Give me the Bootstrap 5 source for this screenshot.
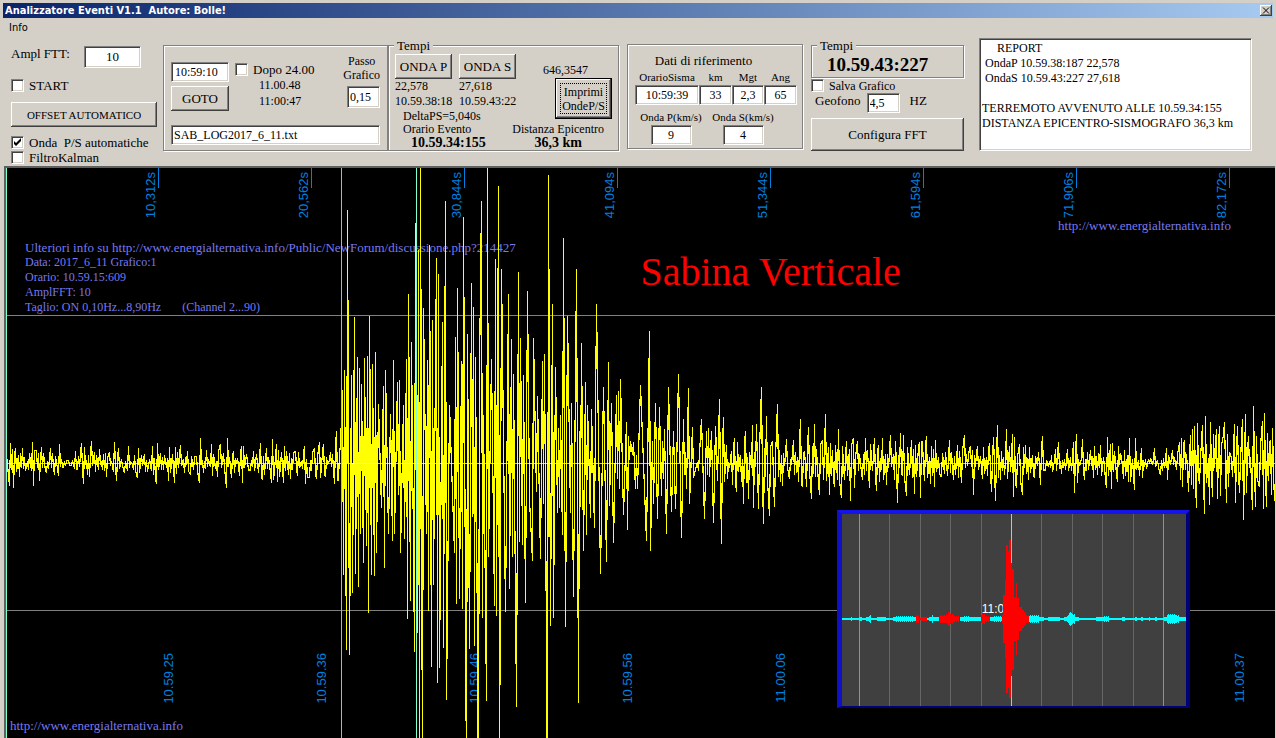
<!DOCTYPE html>
<html lang="it">
<head>
<meta charset="utf-8">
<meta name="viewport" content="width=device-width, initial-scale=1">
<title>Analizzatore Eventi V1.1</title>
<link href="https://cdn.jsdelivr.net/npm/bootstrap@5.3.0/dist/css/bootstrap.min.css" rel="stylesheet">
<style>
  :root { --face: #d4d0c8; --dark: #404040; --mid: #808080; }
  body { background: var(--face); color: #000; font: 13px/16px "Liberation Serif", serif; }
  .titlebar { margin: 3px 3px 0; height: 15px; padding: 0 0 0 2px; background: linear-gradient(90deg, #0a246a, #a6caf0); color: #fff; font: bold 11px/15px "DejaVu Sans Condensed", "DejaVu Sans", sans-serif; }
  .titlebar h1 { font: inherit; white-space: pre; }
  .menubar { height: 20px; padding-left: 9px; font: 11px/20px "DejaVu Sans Condensed", "DejaVu Sans", sans-serif; }
  .menubar a { color: #000; text-decoration: none; }

  .key { background: var(--face); color: #000; border: 0; border-radius: 0; padding: 0; font-size: 13px; line-height: 16px; height: 25px; white-space: nowrap;
    box-shadow: inset -1px -1px var(--dark), inset 1px 1px #fff, inset -2px -2px var(--mid); }
  .key-close { width: 12px; height: 11px; margin-right: 1px; line-height: 0; }
  .key-default { width: 57px; height: 41px; border: 1px solid #000; font-size: 12px; line-height: 14px; outline: 1px dotted #000; outline-offset: -6px; }
  .key-offset { margin: 9px 0 8px; }
  .key-wave { width: 57px; }
  .key-tall { height: 33px; margin-top: 5px; }
  .field { border: 1px solid; border-color: var(--mid) #fff #fff var(--mid); box-shadow: inset 1px 1px var(--dark), inset -1px -1px var(--face); border-radius: 0; background: #fff; color: #000; padding: 0 3px; font-size: 13px; line-height: 16px; height: 20px; min-width: 0; }
  .field-ampl { width: 57px; height: 22px; }
  .field-step { width: 33px; height: 22px; padding: 0 2px; }
  .field-speed { width: 41px; }
  .field-geo { width: 33px; margin: 0 10px 0 6px; padding: 0 2px; }
  .field-file { margin-top: 14px; padding: 0 2px; }
  .tick-box { appearance: none; flex: none; width: 13px; height: 13px; margin: 0; background: #fff center no-repeat; border: 1px solid; border-color: var(--mid) #fff #fff var(--mid); box-shadow: inset 1px 1px var(--dark), inset -1px -1px var(--face); }
  .tick-box:checked { background-image: url("data:image/svg+xml,%3Csvg xmlns='http://www.w3.org/2000/svg' width='9' height='9'%3E%3Cpath d='M1 3v3l2 2 5-5V0L3 5z'/%3E%3C/svg%3E"); }
  .check-line { display: flex; align-items: center; gap: 5px; height: 15px; white-space: pre; }
  .frame { border: 1px solid var(--mid); box-shadow: 1px 1px #fff, inset 1px 1px #fff; position: relative; }
  .frame legend { position: absolute; left: 5px; top: -8px; width: auto; margin: 0; padding: 0 3px; background: var(--face); font-size: 13px; line-height: 16px; float: none; }
  .fs12 { font-size: 12px; } .fs11 { font-size: 11px; } .lh13 { line-height: 13px; } .lh14 { line-height: 14px; }
  .fw14 { font-size: 14px; line-height: 14px; font-weight: bold; }
  .clock { font-size: 19px; line-height: 20px; }

  .col-main { width: 146px; margin-left: 11px; padding: 8px 0 1px; }
  .start-line { margin-top: 10px; }
  .col-goto { width: 225px; height: 106px; margin: 7px 0 0 6px; padding: 8px 7px 0; }
  .goto-keys { width: 58px; margin-right: 6px; }
  .col-waves { width: 231px; height: 106px; margin-top: 7px; padding: 8px 6px 0; }
  .delta { margin-top: -9px; }
  .col-ref { width: 176px; height: 105px; margin: 6px 0 0 8px; padding: 8px 6px 0 7px; }
  .col-fft { width: 153px; margin: 7px 0 0 8px; }
  .clock-frame { height: 33px; padding: 9px 0 0 15px; }
  .report { flex: 1 1 0; margin: 0 24px 0 15px; height: 113px; padding: 2px; font-size: 12px; line-height: 15px; resize: none; overflow: hidden; white-space: pre; }
  .wave-grid { display: grid; grid-template-columns: 64px 64px; align-self: flex-start; line-height: 15px; font-size: 12px; }
  .ref-grid { display: grid; grid-template-columns: 64px 33px 32px 33px; }
  .speed-grid { display: grid; grid-template-columns: 72px 72px; margin-top: 4px; }

  .scope { position: relative; flex: 1 1 0; min-height: 300px; margin: 0 1px 0 4px; border: 2px solid #606060; border-width: 2px 0 0 2px; background: #000; overflow: hidden; }
  .scope > svg { position: absolute; inset: 0; width: 100%; height: 100%; pointer-events: none; }
  .scope a, .notes { color: #7878f0; text-decoration: none; line-height: 15px; white-space: pre; }
  .axis { position: absolute; left: 0; width: 100%; display: flex; color: #0080e0; font: 13px/14px "Liberation Sans", sans-serif; }
  .axis > div { flex: 0 0 auto; width: calc(100% * 153 / 1269); }
  .axis span { writing-mode: vertical-rl; transform: rotate(180deg); white-space: nowrap; }
  .axis-top { top: 0; }
  .axis-top > div { display: flex; justify-content: flex-end; padding: 4px 1px 0 0; background: linear-gradient(#0080e0, #0080e0) right top / 1px 20px no-repeat; }
  .axis-bottom { top: 85%; left: 12.3%; }
  .notes { position: absolute; left: 19px; top: 72px; font-size: 12px; }
  .notes div:first-child { font-size: 13px; }
  .site-top { position: absolute; right: 44px; top: 50px; }
  .site-bottom { position: absolute; left: 4px; bottom: 5px; }
  .station { position: absolute; left: 50%; top: 80px; font-size: 40px; line-height: 48px; color: #f00; white-space: nowrap; }
  .inset-view { position: absolute; left: 65.5%; top: 60%; width: 27.8%; height: 34.8%; border: 4px solid; border-width: 4px 4px 2px 5px; border-color: #1414e8 #000078 #000078 #1010c8; background: #404040; }
  .inset-view svg { display: block; width: 100%; height: 100%; }
  .inset-view span { position: absolute; left: 40.6%; top: 46%; color: #fff; font: 12px/14px "Liberation Sans", sans-serif; }
  .scope svg { shape-rendering: crispEdges; }
  .scope path { vector-effect: non-scaling-stroke; fill: none; }
</style>
</head>
<body class="d-flex flex-column vh-100 overflow-hidden">
<header class="titlebar d-flex align-items-center justify-content-between">
  <h1 class="m-0">Analizzatore Eventi V1.1  Autore: Bolle!</h1>
  <button class="key key-close" type="button" aria-label="Chiudi"><svg width="8" height="7" viewBox="0 0 8 7"><path d="M1 0.5l6 6M7 0.5l-6 6" stroke="#000"/></svg></button>
</header>
<nav class="menubar"><a href="#">Info</a></nav>

<main class="d-flex align-items-start flex-shrink-0">
  <section class="col-main flex-shrink-0">
    <div class="d-flex justify-content-between pe-3">
      <label for="ampl">Ampl FTT:</label>
      <input id="ampl" class="field field-ampl text-center" value="10">
    </div>
    <label class="check-line start-line"><input type="checkbox" class="tick-box">START</label>
    <button class="key key-offset fs11 w-100 d-block" type="button">OFFSET AUTOMATICO</button>
    <label class="check-line"><input type="checkbox" class="tick-box" checked>Onda  P/S automatiche</label>
    <label class="check-line"><input type="checkbox" class="tick-box">FiltroKalman</label>
  </section>

  <section class="col-goto frame flex-shrink-0">
    <div class="d-flex">
      <div class="goto-keys d-flex flex-column pt-2">
        <input class="field fs12" value="10:59:10" aria-label="Orario">
        <button class="key mt-1 w-100" type="button">GOTO</button>
      </div>
      <div class="pt-2">
        <label class="check-line"><input type="checkbox" class="tick-box">Dopo 24.00</label>
        <div class="ps-4 fs12">11.00.48</div>
        <div class="ps-4 fs12">11:00:47</div>
      </div>
      <label class="ms-auto d-flex flex-column align-items-center fs12 lh14">Passo<span>Grafico</span>
        <input class="field field-step fs12 mt-1 align-self-end" value="0,15"></label>
    </div>
    <input class="field field-file fs12 w-100" value="SAB_LOG2017_6_11.txt" aria-label="File">
  </section>

  <fieldset class="col-waves frame flex-shrink-0">
    <legend>Tempi</legend>
    <div class="d-flex justify-content-between">
      <div class="wave-grid">
        <button class="key key-wave" type="button">ONDA P</button>
        <button class="key key-wave" type="button">ONDA S</button>
        <span>22,578</span><span>27,618</span>
        <span>10.59.38:18</span><span>10.59.43:22</span>
      </div>
      <div class="d-flex flex-column align-items-end pt-2">
        <span class="fs12 pe-4">646,3547</span>
        <button class="key key-default" type="button">Imprimi<br>OndeP/S</button>
      </div>
    </div>
    <div class="delta fs12 lh13 ps-2">DeltaPS=5,040s</div>
    <div class="d-flex justify-content-between fs12 lh13 ps-2 pe-2">
      <div>Orario Evento<div class="fw14 ps-2">10.59.34:155</div></div>
      <div class="text-center">Distanza Epicentro<div class="fw14">36,3 km</div></div>
    </div>
  </fieldset>

  <section class="col-ref frame flex-shrink-0">
    <div class="pe-4 text-center">Dati di riferimento</div>
    <div class="ref-grid fs11 text-center">
      <label>OrarioSisma<input class="field fs12 w-100 text-center" value="10:59:39"></label>
      <label>km<input class="field fs12 w-100 text-center" value="33"></label>
      <label>Mgt<input class="field fs12 w-100 text-center" value="2,3"></label>
      <label>Ang<input class="field fs12 w-100 text-center" value="65"></label>
    </div>
    <div class="speed-grid fs11 text-center">
      <label>Onda P(km/s)<input class="field field-speed fs12 text-center" value="9"></label>
      <label>Onda S(km/s)<input class="field field-speed fs12 text-center" value="4"></label>
    </div>
  </section>

  <section class="col-fft flex-shrink-0">
    <fieldset class="frame clock-frame">
      <legend>Tempi</legend>
      <strong class="clock">10.59.43:227</strong>
    </fieldset>
    <label class="check-line fs12"><input type="checkbox" class="tick-box">Salva Grafico</label>
    <div class="d-flex ps-1">
      <label for="geo">Geofono</label>
      <input id="geo" class="field field-geo fs12" value="4,5"><span>HZ</span>
    </div>
    <button class="key key-tall w-100 d-block" type="button">Configura FFT</button>
  </section>

  <textarea class="field report" aria-label="Report" spellcheck="false">     REPORT
 OndaP 10.59.38:187 22,578
 OndaS 10.59.43:227 27,618

TERREMOTO AVVENUTO ALLE 10.59.34:155
DISTANZA EPICENTRO-SISMOGRAFO 36,3 km</textarea>
</main>

<section class="scope">
  <div class="axis axis-top">
    <div><span>10,312s</span></div><div><span>20,562s</span></div><div><span>30,844s</span></div><div><span>41,094s</span></div><div><span>51,344s</span></div><div><span>61,594s</span></div><div><span>71,906s</span></div><div><span>82,172s</span></div>
  </div>
  <div class="axis axis-bottom">
    <div><span>10.59.25</span></div><div><span>10.59.36</span></div><div><span>10.59.46</span></div><div><span>10.59.56</span></div><div><span>11.00.06</span></div><div></div><div></div><div><span>11.00.37</span></div>
  </div>
  <div class="notes"><div>Ulteriori info su <a href="#">http://www.energialternativa.info/Public/NewForum/discussione.php?214427</a></div><div>Data: 2017_6_11 Grafico:1</div><div>Orario: 10.59.15:609</div><div>AmplFFT: 10</div><div>Taglio: ON 0,10Hz...8,90Hz       (Channel 2...90)</div></div>
  <a class="site-top" href="#">http://www.energialternativa.info</a>
  <a class="site-bottom" href="#">http://www.energialternativa.info</a>
  <div class="station">Sabina Verticale</div>

  <svg viewBox="6 168 1269 570" preserveAspectRatio="none" aria-label="Sismogramma">
    <path d="M6 315.5H1275M6 610.5H1275" stroke="#808080"/>
    <path id="trace" stroke="#ff0" stroke-width="1.2" stroke-linejoin="bevel"/>
    <path d="M6 463.5H1275" stroke="#fff" stroke-opacity=".75"/>
    <path d="M341.5 168V738" stroke="#f08cd8"/>
    <path d="M416.5 168V738M6.5 168V738" stroke="#7fffd4"/>
  </svg>

  <div class="inset-view">
    <span>11:0</span>
    <svg class="position-relative" viewBox="842 513 344 194" preserveAspectRatio="none" aria-label="Panoramica">
      <path d="M889.5 513V707M920.5 513V707M950.5 513V707M981.5 513V707M1041.5 513V707M1072.5 513V707M1102.5 513V707M1133.5 513V707" stroke="#666"/>
      <path d="M859.5 513V707M1163.5 513V707" stroke="#909090"/>
      <path d="M1011.5 513V707" stroke="#c0c0c0"/>
      <path id="calm" stroke="#0ff"/>
      <path id="strong" stroke="#f00"/>
    </svg>
  </div>
</section>

<script src="https://cdn.jsdelivr.net/npm/bootstrap@5.3.0/dist/js/bootstrap.bundle.min.js"></script>
<script>
  const before = "6,455 9,486 10,443 13,488 15,448 19,477 22,448 28,470 32,442 33,486 36,451 39,481 41,447 46,473 50,448 54,475 58,476 59,444 63,467 68,460 71,466 75,451 77,470 81,443 83,484 84,447 89,477 91,441 95,472 99,449 106,477 109,452 114,442 116,481 118,448 124,473 128,446 133,470 137,478 138,448 145,472 152,446 156,484 157,443 163,470 168,481 169,447 174,483 175,447 180,445 184,473 187,451 190,475 196,456 199,483 200,438 203,473 206,450 211,444 217,477 220,444 226,488 227,438 231,478 233,451 239,476 241,446 242,483 243,446 250,470 253,451 260,443 262,480 266,448 271,483 272,439 276,444 277,482 283,483 284,446 290,479 295,451 297,476 304,446 305,484 309,478 314,448 316,479 319,442 323,444 325,477 330,452 334,484 336,431 338,480 340,445";
  const burst = "342,370 343,539 344,352 346,608 347,206 349,612 351,357 352,556 354,304 355,538 357,340 358,550 359,350 360,502 361,365 363,528 364,341 366,513 367,339 368,574 369,303 371,539 372,347 374,540 375,336 376,519 378,383 381,478 383,367 384,533 385,352 388,502 390,392 392,508 393,343 394,502 397,363 398,466 399,361 400,519 403,384 404,506 406,342 407,579 408,283 410,563 411,327 414,609 415,218 417,592 418,243 419,740 420,160 422,740 423,296 426,502 427,343 428,572 429,238 431,623 432,307 433,548 436,250 437,638 438,265 439,624 442,308 443,606 445,198 446,653 449,384 454,519 455,322 456,566 457,277 459,561 461,344 462,570 463,213 466,740 467,319 469,607 471,273 472,486 473,295 474,604 475,340 478,740 479,352 481,198 482,578 483,393 486,654 487,160 488,523 491,342 494,567 495,251 496,577 498,184 499,740 501,260 505,573 508,283 509,552 511,324 512,523 513,356 516,660 518,263 519,509 520,323 522,512 523,357 525,565 527,280 529,470 532,526 533,323 536,463 537,376 540,525 542,344 543,474 544,338 547,740 548,174 550,586 552,292 553,578 555,349 557,483 558,405 559,478 560,393 562,503 563,232 565,587 567,303 570,483 571,382 573,559 576,260 578,656 579,408 580,477 581,328 583,517 585,363 586,503 587,384 590,487 591,388 594,496 596,292 600,538 603,368 606,527 608,345 609,476 611,382 613,510 616,375 617,452 618,371 619,461 620,360 623,484 626,400 627,498 628,412 629,434 630,417 632,430 633,418 635,461 636,430 637,461 640,366 646,508 649,317 650,517 652,417 653,474 655,382 657,488 659,386 661,467 662,417 663,452 664,406 666,502 668,368 671,482 673,408 675,479 676,445 678,356 681,505 683,397 684,448 685,427 686,461 688,369 689,474 692,404 693,451 697,436 698,444 701,397 704,488 706,408 707,448 708,405 709,450 711,408 713,492 715,403 717,453";
  const after = "719,399 721,544 723,417 727,479 728,462 731,451 732,485 734,438 736,492 737,442 740,455 743,504 745,431 748,499 752,425 753,508 756,424 758,509 761,387 763,524 766,416 769,516 772,441 774,507 777,404 780,482 781,455 782,486 786,439 789,479 793,440 796,473 798,482 800,419 802,487 804,451 806,487 808,427 811,499 814,424 815,477 816,449 819,495 822,440 823,480 825,414 829,495 830,443 834,487 838,429 841,498 842,446 844,480 846,441 850,501 853,438 854,488 857,441 862,480 865,438 869,488 874,438 876,491 878,445 879,482 882,438 886,485 890,435 894,480 895,441 897,503 900,433 902,476 903,435 906,496 911,440 914,494 915,445 919,442 920,498 922,442 924,481 926,436 930,484 931,446 934,487 935,440 941,477 949,440 953,480 957,445 961,483 964,435 970,446 973,495 977,446 982,479 983,447 987,476 989,443 991,492 993,437 995,501 997,425 1000,480 1001,451 1004,475 1006,429 1010,472 1012,434 1013,497 1014,437 1016,488 1019,444 1022,495 1025,445 1028,480 1029,447 1034,478 1038,452 1040,485 1042,436 1045,470 1051,455 1055,449 1058,442 1061,474 1064,459 1067,449 1071,471 1073,442 1074,493 1076,434 1077,483 1082,439 1084,480 1087,452 1090,450 1093,478 1094,446 1097,475 1100,445 1106,488 1107,437 1111,489 1112,443 1117,482 1118,446 1123,479 1128,482 1129,438 1134,490 1135,438 1139,476 1141,448 1142,478 1148,459 1154,448 1160,475 1166,448 1167,480 1172,450 1176,470 1179,442 1180,480 1181,438 1182,487 1184,440 1188,492 1190,435 1191,485 1192,429 1193,489 1194,426 1196,508 1197,423 1199,484 1202,425 1204,514 1205,416 1209,505 1210,422 1212,497 1213,434 1216,429 1217,499 1219,426 1220,496 1223,435 1224,422 1226,503 1227,434 1228,487 1231,458 1234,424 1235,503 1237,426 1239,493 1242,419 1243,520 1245,414 1246,493 1248,436 1252,510 1253,406 1255,507 1256,436 1259,487 1262,421 1263,509 1264,413 1266,507 1267,433 1270,440 1271,495 1272,428 1274,501";
  const parse = (s, f = y => y) => s.split(" ").map(p => { const [x, y] = p.split(",").map(Number); return [x, f(y)]; });
  const mid = 463;
  let seed = 7;
  const rnd = () => (seed = (seed * 16807) % 2147483647) / 2147483647;
  // Fills wide gaps between turning points with small background oscillations.
  const ripple = pts => pts.flatMap(([x, y], i) => {
    const out = [[x, y]], next = pts[i + 1];
    if (next) {
      let side = y < mid ? 1 : -1;
      const amp = Math.min(26, (Math.abs(y - mid) + Math.abs(next[1] - mid)) / 2);
      for (let k = x + 1; k < next[0]; k += rnd() < .5 ? 1 : 2, side = -side) out.push([k, mid + side * amp * (.1 + .7 * rnd())]);
    }
    return out;
  });
  const all = [...ripple(parse(before)), ...parse(burst, y => mid + (y - 437) * 1.0964), ...ripple(parse(after))];
  document.getElementById("trace").setAttribute("d", "M" + all.map(([x, y]) => `${x + .5} ${Math.round(y)}`).join("L"));

  // Overview: half heights from each x up to the next one, mirrored about the axis.
  const bars = (s, id) => {
    let d = "";
    s.split("|").forEach(run => {
      const p = parse(run);
      p.forEach(([x, h], i) => { for (let k = x; p[i + 1] && k < p[i + 1][0]; k++) { const v = h > 2 && h < 8 ? h - k % 2 : h; d += `M${k + .5} ${619 - v}V${619 + v}`; } });
    });
    document.getElementById(id).setAttribute("d", d);
  };
  bars("842,1 851,2 852,1 859,2 862,1 866,2 869,4 871,1 877,2 886,1 893,2 895,3 914,2 916,1|927,1 929,2 932,4 933,2 939,1|960,2 964,3 970,2 981,1|990,2 993,3 1002,1|1029,4 1039,2 1044,1 1048,2 1060,1 1064,2 1067,4 1069,7 1072,5 1075,2 1079,1 1096,2 1103,3 1109,1 1122,2 1125,1 1135,2 1137,1 1141,2 1143,1 1149,2 1150,1 1155,2 1157,1 1164,2 1167,5 1176,4 1179,2 1186,1", "calm");
  bars("916,4 919,1 921,2 927,1|939,4 946,5 948,7 950,5 954,3 959,1|981,5 985,3 990,1|1002,4 1003,24 1005,39 1006,75 1008,69 1009,80 1011,57 1012,51 1014,22 1016,36 1017,21 1019,12 1022,9 1024,7 1026,4 1029,1", "strong");
</script>
</body>
</html>
